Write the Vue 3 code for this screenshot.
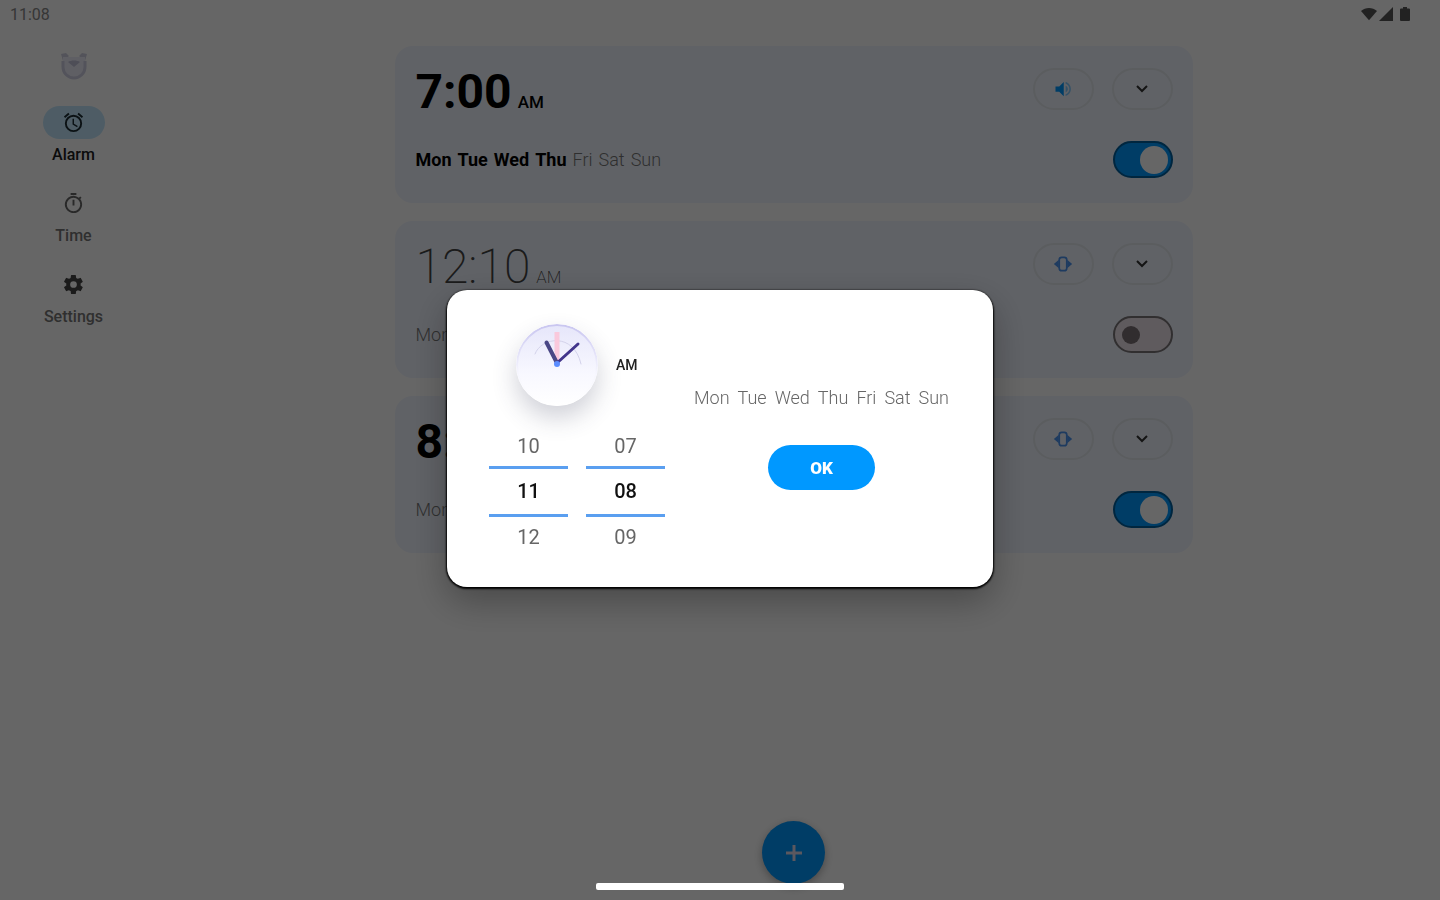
<template>
  <div class="screen">
    <header class="status-bar">
      <span>11:08</span>
      <div class="status-icons">
        <svg width="16" height="14" viewBox="0 0 18 14"><path d="M9 14 0 3.500C5-1 13-1 18 3.500Z" /></svg>
        <svg width="14" height="14" viewBox="0 0 14 14"><path d="M14 0v14H0Z" /></svg>
        <svg class="battery" width="10" height="14" viewBox="0 0 10 14"><path d="M3 0h4v1.500h2a1 1 0 0 1 1 1V13a1 1 0 0 1-1 1H1a1 1 0 0 1-1-1V2.500a1 1 0 0 1 1-1h2Z" /></svg>
      </div>
    </header>

    <div class="body">
      <nav class="rail">
        <svg class="logo" width="30" height="28" viewBox="0 0 30 28" fill="none">
          <path d="M2 2l5-1 3 3-6 5ZM28 2l-5-1-3 3 6 5Z" fill="#d0d0e2" />
          <path d="M4 5h22v10a11 11 0 0 1-22 0Z" fill="#eeeefa" />
          <path d="M4 9v6a11 11 0 0 0 22 0V9" stroke="#d0d0e4" stroke-width="3" />
          <path d="M9 10c3-2 9-2 12 0l-6 5Z" fill="#c2c2da" />
        </svg>
        <a
          v-for="item in navItems"
          :key="item.label"
          href="#"
          class="rail-item"
          :class="{ active: item.label === activeNav }"
          @click.prevent="activeNav = item.label"
        >
          <span class="rail-icon">
            <svg width="23" height="23" viewBox="0 0 24 24"><path :d="item.icon" fill-rule="evenodd" /></svg>
          </span>
          <span class="rail-label">{{ item.label }}</span>
        </a>
      </nav>

      <main class="content">
        <section v-for="alarm in alarms" :key="alarm.id" class="card" :class="{ off: !alarm.enabled }">
          <div class="card-row top">
            <div class="time">
              <span class="time-value">{{ alarm.time }}</span>
              <span class="time-period">AM</span>
            </div>
            <div class="card-actions">
              <button class="pill" :aria-label="alarm.sound ? 'Sound' : 'Vibrate'">
                <svg v-if="alarm.sound" width="18" height="18" viewBox="0 0 24 24" fill="#0098ff">
                  <path d="M2 8.500v7h5l6 6v-19l-6 6Z" />
                  <path d="M15.500 7.500v9c1.800-.8 3-2.500 3-4.500s-1.200-3.700-3-4.500ZM15.500 2.800v2.100c3 .9 5 3.700 5 7.100s-2 6.200-5 7.100v2.100c4-.9 7-4.700 7-9.200s-3-8.300-7-9.200Z" opacity=".45" />
                </svg>
                <svg v-else width="20" height="20" viewBox="0 0 24 24">
                  <rect x="7.500" y="4" width="9" height="16" rx="3" fill="none" stroke="#4b93f0" stroke-width="2" />
                  <path d="M7 7v10l-6-5ZM17 7v10l6-5Z" fill="#4b93f0" />
                </svg>
              </button>
              <button class="pill" aria-label="Expand">
                <svg width="14" height="10" viewBox="0 0 14 10" fill="none" stroke="#333" stroke-width="2">
                  <path d="M2 2l5 5 5-5" />
                </svg>
              </button>
            </div>
          </div>
          <div class="card-row">
            <div class="days">
              <span v-for="day in days" :key="day" :class="{ on: alarm.days.includes(day) }">{{ day }}</span>
            </div>
            <input v-model="alarm.enabled" type="checkbox" role="switch" class="switch" :aria-label="alarm.time" />
          </div>
        </section>

        <button class="fab" aria-label="Add alarm">
          <svg width="18" height="18" viewBox="0 0 18 18" stroke="#e4dcee" stroke-width="3"><path d="M9 1v16M1 9h16" /></svg>
        </button>
      </main>
    </div>

    <div class="scrim">
      <div class="dialog" role="dialog" aria-modal="true" aria-label="Alarm time">
        <div class="picker">
          <div class="clock-row">
            <svg class="clock" width="82" height="82" viewBox="0 0 82 82" fill="none" stroke-linecap="round">
              <defs>
                <linearGradient id="face" x1="0" y1="0" x2="0" y2="1">
                  <stop offset="0" stop-color="#e6e6fa" />
                  <stop offset="0.600" stop-color="#f8f8ff" />
                  <stop offset="1" stop-color="#fff" />
                </linearGradient>
                <linearGradient id="rim" x1="0" y1="0" x2="0" y2="1">
                  <stop offset="0" stop-color="#c9c6f0" />
                  <stop offset="0.600" stop-color="#f6f6fe" />
                  <stop offset="1" stop-color="#fff" />
                </linearGradient>
              </defs>
              <circle cx="41" cy="41" r="40" fill="url(#face)" stroke="url(#rim)" stroke-width="2" />
              <path d="M19 30C25 13 58 8 65 40" stroke="#d3d2ea" />
              <path d="M41 38V8" stroke="#fac9dc" stroke-width="5" stroke-linecap="butt" />
              <path d="M41 39 30.500 18.500" stroke="#4a4785" stroke-width="4" />
              <path d="M41 39 62 20" stroke="#43368c" stroke-width="3" />
              <circle cx="41" cy="40" r="3" fill="#5b8dff" />
            </svg>
            <button class="period">AM</button>
          </div>
          <div class="wheels">
            <div v-for="wheel in wheels" :key="wheel.name" class="wheel" role="group" :aria-label="wheel.name">
              <button
                v-for="(value, i) in wheel.values"
                :key="value"
                class="wheel-item"
                :class="{ selected: i === 1 }"
              >{{ value }}</button>
            </div>
          </div>
        </div>
        <div class="side">
          <div class="dialog-days">
            <button
              v-for="day in days"
              :key="day"
              :class="{ on: picked.includes(day) }"
              :aria-pressed="picked.includes(day)"
              @click="toggleDay(day)"
            >{{ day }}</button>
          </div>
          <button class="ok">OK</button>
        </div>
      </div>
    </div>
    <div class="home-bar"></div>
  </div>
</template>

<script setup>
import { ref } from 'vue'

const days = ['Mon', 'Tue', 'Wed', 'Thu', 'Fri', 'Sat', 'Sun']

const navItems = [
  {
    label: 'Alarm',
    icon: 'M22 5.700l-4.600-3.900-1.300 1.500 4.600 3.900ZM7.900 3.400 6.600 1.900 2 5.700l1.300 1.500ZM12.500 8H11v6l4.700 2.900.8-1.200-4-2.400ZM12 4a9 9 0 1 0 0 18 9 9 0 0 0 0-18Zm0 16a7 7 0 1 1 0-14 7 7 0 0 1 0 14Z'
  },
  {
    label: 'Time',
    icon: 'M15 1H9v2h6ZM11 14h2V8h-2ZM19 7.400l1.400-1.400-1.400-1.400-1.400 1.400A9 9 0 1 0 19 7.400ZM12 20a7 7 0 1 1 0-14 7 7 0 0 1 0 14Z'
  },
  {
    label: 'Settings',
    icon: 'M19.400 13a7.500 7.500 0 0 0 0-2l2.100-1.600a.5.5 0 0 0 .1-.6l-2-3.500a.5.5 0 0 0-.6-.2l-2.500 1a7.300 7.300 0 0 0-1.700-1l-.4-2.700a.5.5 0 0 0-.5-.4h-4a.5.5 0 0 0-.5.400L9 5.100a7.300 7.300 0 0 0-1.700 1l-2.500-1a.5.5 0 0 0-.6.200l-2 3.500a.5.5 0 0 0 .1.600L4.500 11a7.500 7.500 0 0 0 0 2l-2.200 1.600a.5.5 0 0 0-.1.600l2 3.500c.1.200.4.300.6.200l2.500-1c.5.400 1.100.8 1.700 1l.4 2.700c0 .2.200.4.500.4h4c.3 0 .5-.2.500-.4l.4-2.700c.6-.2 1.200-.6 1.700-1l2.500 1c.2.100.5 0 .6-.2l2-3.500a.5.5 0 0 0-.1-.6ZM12 15.500a3.500 3.500 0 1 1 0-7 3.500 3.500 0 0 1 0 7Z'
  }
]
const activeNav = ref('Alarm')

const alarms = ref([
  { id: 1, time: '7:00', enabled: true, sound: true, days: ['Mon', 'Tue', 'Wed', 'Thu'] },
  { id: 2, time: '12:10', enabled: false, sound: false, days: [] },
  { id: 3, time: '8:00', enabled: true, sound: false, days: [] }
])

const wheels = [
  { name: 'Hour', values: ['10', '11', '12'] },
  { name: 'Minute', values: ['07', '08', '09'] }
]

const picked = ref([])
const toggleDay = (day) => {
  picked.value = picked.value.includes(day)
    ? picked.value.filter((d) => d !== day)
    : [...picked.value, day]
}
</script>

<style>
body {
  margin: 0;
}
</style>

<style scoped>
.screen {
  display: flex;
  flex-direction: column;
  min-height: 100vh;
  background: #fff;
  font-family: Roboto, "Liberation Sans", sans-serif;
  color: #000;
}

button {
  padding: 0;
  border: none;
  background: none;
  font: inherit;
  color: inherit;
  cursor: pointer;
}

.status-bar {
  display: flex;
  justify-content: space-between;
  align-items: center;
  height: 28px;
  padding: 0 30px 0 10px;
  font-size: 16px;
  color: #888;
}

.status-icons {
  display: flex;
  align-items: center;
  gap: 2px;
  fill: #555;
}

.battery {
  margin-left: 5px;
}

.body {
  flex: 1;
  display: flex;
}

.rail {
  display: flex;
  flex-direction: column;
  align-items: center;
  gap: 24px;
  width: 147px;
  padding-top: 24px;
}

.logo {
  margin-bottom: 2px;
}

.rail-item {
  display: flex;
  flex-direction: column;
  align-items: center;
  gap: 7px;
  text-decoration: none;
  font-size: 16px;
  line-height: 17px;
  font-weight: 500;
  color: #777;
}

.rail-icon {
  display: flex;
  align-items: center;
  justify-content: center;
  width: 62px;
  height: 33px;
  border-radius: 17px;
  fill: #666;
}

.rail-item:last-child .rail-icon {
  fill: #444;
}

.rail-item.active {
  color: #1c1c1c;
}

.rail-item.active .rail-icon {
  background: #c2e7fc;
  fill: #1c2c34;
}

.content {
  flex: 1;
  display: flex;
  flex-direction: column;
  align-items: center;
  gap: 18px;
  padding: 18px 20px 16px;
}

.card {
  box-sizing: border-box;
  width: 100%;
  max-width: 798px;
  padding: 22px 20px 25px 21px;
  border-radius: 18px;
  background: #f0f5ff;
}

.card-row {
  display: flex;
  justify-content: space-between;
  align-items: center;
}

.card-row.top {
  margin-bottom: 31px;
}

.time {
  display: flex;
  align-items: baseline;
  gap: 6px;
  height: 42px;
  line-height: 48px;
}

.time-value {
  font-size: 48px;
  font-weight: 700;
}

.time-period {
  font-size: 17px;
  font-weight: 500;
}

.off .time-value,
.off .time-period {
  font-weight: 200;
  color: #444;
}

.card-actions {
  display: flex;
  gap: 18px;
}

.pill {
  display: flex;
  align-items: center;
  justify-content: center;
  width: 61px;
  height: 42px;
  border: 2px solid #e3e8ee;
  border-radius: 21px;
}

.days {
  display: flex;
  gap: 6px;
  font-size: 18px;
  font-weight: 300;
  color: #777;
}

.days .on {
  font-weight: 700;
  color: #000;
}

.switch {
  appearance: none;
  display: flex;
  align-items: center;
  box-sizing: border-box;
  width: 60px;
  height: 37px;
  margin: 0;
  padding: 0 7px;
  border: 2px solid #7a7579;
  border-radius: 19px;
  background: #eee4ea;
  cursor: pointer;
}

.switch::before {
  content: "";
  width: 18px;
  height: 18px;
  border-radius: 50%;
  background: #7a7075;
}

.switch:checked {
  justify-content: flex-end;
  padding: 0 3px;
  border-color: #00609f;
  background: #0098ff;
}

.switch:checked::before {
  width: 28px;
  height: 28px;
  background: #fff;
}

.fab {
  display: flex;
  align-items: center;
  justify-content: center;
  width: 63px;
  height: 63px;
  margin-top: auto;
  border-radius: 50%;
  background: #0098ff;
  box-shadow: 0 3px 8px rgba(0, 0, 0, 0.3);
}

.scrim {
  position: fixed;
  inset: 0;
  display: flex;
  align-items: center;
  justify-content: center;
  padding-bottom: 24px;
  background: rgba(0, 0, 0, 0.6);
}

.dialog {
  display: flex;
  justify-content: space-between;
  box-sizing: border-box;
  width: 546px;
  padding: 34px 44px 30px 42px;
  border-radius: 20px;
  background: #fff;
  box-shadow: 0 1px 2px 1px #000, 0 14px 36px rgba(0, 0, 0, 0.3);
}

.picker {
  display: flex;
  flex-direction: column;
  gap: 20px;
}

.clock-row {
  display: flex;
  align-items: center;
  gap: 18px;
  padding-left: 27px;
}

.clock {
  border-radius: 50%;
  box-shadow: 0 12px 24px rgba(60, 64, 90, 0.24);
}

.period {
  font-size: 14px;
  font-weight: 500;
  color: #222;
}

.wheels {
  display: flex;
  gap: 18px;
}

.wheel {
  display: flex;
  flex-direction: column;
  width: 79px;
}

.wheel-item {
  height: 40px;
  font-size: 20px;
  color: #666;
}

.wheel-item.selected {
  height: 51px;
  border-top: 3px solid #5a9ff0;
  border-bottom: 3px solid #5a9ff0;
  font-weight: 500;
  color: #111;
}

.side {
  display: flex;
  flex-direction: column;
  justify-content: center;
  align-items: center;
  gap: 36px;
  padding-bottom: 3px;
}

.dialog-days {
  display: flex;
  gap: 8px;
  font-size: 18px;
  line-height: 22px;
  font-weight: 300;
  color: #666;
}

.dialog-days .on {
  font-weight: 700;
  color: #000;
}

.ok {
  width: 107px;
  height: 45px;
  border-radius: 23px;
  background: #0098ff;
  font-size: 17px;
  font-weight: 900;
  color: #fff;
}

.home-bar {
  position: fixed;
  bottom: 10px;
  left: 50%;
  width: 248px;
  height: 7px;
  margin-left: -124px;
  border-radius: 2px;
  background: #fff;
}
</style>
